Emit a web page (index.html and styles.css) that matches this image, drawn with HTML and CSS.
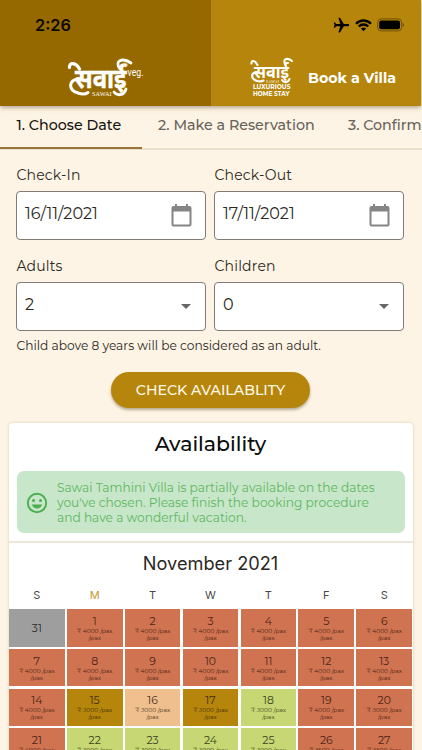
FILE: index.html
```html
<!DOCTYPE html>
<html lang="en">
<head>
<meta charset="utf-8">
<title>Sawai – Book a Villa</title>
<link rel="stylesheet" href="styles.css">
</head>
<body>
<header class="appbar">
  <div class="brand brand-veg">
    <div class="clock">2:26</div>
    <svg class="logo-veg" width="80" height="40" viewBox="0 0 80 40" fill="#fff">
      <text class="deva" transform="translate(8 30) scale(.92 1)" x="0" y="0" font-size="27" stroke="#fff" stroke-width=".5" textLength="56" lengthAdjust="spacingAndGlyphs">सवाई</text>
      <path d="M2.500 9.500C2 4 9 4 12.500 11" fill="none" stroke="#fff" stroke-width="3.200" stroke-linecap="round"/>
      <path d="M12 21C1 22 1 32 11 35C15 36.500 19 36 21 34.500" fill="none" stroke="#fff" stroke-width="3" stroke-linecap="round"/>
      <path d="M53 11C47 3 55-1 64 5" fill="none" stroke="#fff" stroke-width="2.800" stroke-linecap="round"/>
      <path d="M47 34C50 38 57 38 59 31" fill="none" stroke="#fff" stroke-width="2.800" stroke-linecap="round"/>
      <circle cx="58.500" cy="7" r="1.800" fill="none" stroke="#e8d7af" stroke-width=".8"/>
      <text class="serif" x="25" y="38" font-size="6.200" textLength="19.500">SAWAI</text>
      <text class="narrow" x="60.500" y="17.500" font-size="10" textLength="16" lengthAdjust="spacingAndGlyphs">veg.</text>
    </svg>
  </div>
  <div class="brand brand-villa">
    <div class="status">
      <svg width="17" height="17" viewBox="1 1 22 22"><path transform="rotate(90 12 12)" d="M21 16v-2l-8-5V3.500c0-.83-.67-1.500-1.500-1.500S10 2.670 10 3.500V9l-8 5v2l8-2.500V19l-2 1.500V22l3.500-1 3.500 1v-1.500L13 19v-5.500l8 2.500z"/></svg>
      <svg width="17" height="13" viewBox="0 0 17 13" fill="none" stroke="#000" stroke-width="2.300"><path d="M1 4.700C5.200.4 11.800.4 16 4.700M3.700 7.500C6.400 4.800 10.600 4.800 13.300 7.500"/><path d="M8.500 12.200 5.900 9.600Q8.500 7.500 11.100 9.600Z" fill="#000" stroke="none"/></svg>
      <svg width="28" height="14" viewBox="0 0 28 14"><rect x=".6" y=".9" width="24" height="12" rx="3.500" fill="none" stroke="#654b0c" stroke-width=".9"/><rect x="2.200" y="2.500" width="20.800" height="8.800" rx="2"/><path d="M25.700 5v4q1.300-.6 1.300-2t-1.300-2z" fill="#654b0c"/></svg>
    </div>
    <div class="villa-row">
      <svg class="logo-villa" width="46" height="40" viewBox="0 0 46 40" fill="#fff">
        <text class="deva" x="6" y="20" font-size="18" textLength="35" lengthAdjust="spacingAndGlyphs">सवाई</text>
        <path d="M3.500 5.500C3 2 7 2 9.500 7M9 14C2 15 3 21 9 23Q13 24 15.500 22.500M37.500 7C34 1 39-1 44 3M34 22C36 25 40 25 41.500 21" fill="none" stroke="#fff" stroke-width="2.100" stroke-linecap="round"/>
        <text class="serif" x="18" y="24.500" font-size="3.800" textLength="13">SAWAI</text>
        <text class="lux" x="5" y="31.300" font-size="6.300" textLength="37.500" lengthAdjust="spacingAndGlyphs">LUXURIOUS</text>
        <text class="lux" x="5" y="37.700" font-size="6.300" textLength="36.500" lengthAdjust="spacingAndGlyphs">HOME STAY</text>
      </svg>
      <span class="book">Book a Villa</span>
    </div>
  </div>
</header>
<nav class="tabs">
  <div class="tab tab-on">1. Choose Date</div>
  <div class="tab">2. Make a Reservation</div>
  <div class="tab">3. Confirm</div>
</nav>
<main>
  <form class="form">
    <div class="field"><label>Check-In</label>
      <div class="box"><span class="date">16/11/2021</span><svg class="cal" width="21" height="23" viewBox="0 0 21 23"><path fill="#858585" fill-rule="evenodd" d="M4 0h2v2h9V0h2v2h1.500Q20.500 2 20.500 4v16.500q0 2-2 2h-16q-2 0-2-2V4q0-2 2-2H4zM2.500 7.500v13h16v-13z"/></svg></div></div>
    <div class="field"><label>Check-Out</label>
      <div class="box"><span class="date">17/11/2021</span><svg class="cal" width="21" height="23" viewBox="0 0 21 23"><path fill="#858585" fill-rule="evenodd" d="M4 0h2v2h9V0h2v2h1.500Q20.500 2 20.500 4v16.500q0 2-2 2h-16q-2 0-2-2V4q0-2 2-2H4zM2.500 7.500v13h16v-13z"/></svg></div></div>
    <div class="field"><label>Adults</label>
      <div class="box"><span class="num">2</span><i class="caret"></i></div></div>
    <div class="field"><label>Children</label>
      <div class="box"><span class="num">0</span><i class="caret"></i></div></div>
  </form>
  <p class="hint">Child above 8 years will be considered as an adult.</p>
  <button class="check">CHECK AVAILABLITY</button>
  <section class="card">
    <h1>Availability</h1>
    <div class="alert">
      <svg width="22" height="22" viewBox="0 0 22 22" fill="#4caf50"><circle cx="11" cy="11" r="9.200" fill="none" stroke="#4caf50" stroke-width="1.900"/><circle cx="7.500" cy="8.500" r="1.500"/><circle cx="14.500" cy="8.500" r="1.500"/><path d="M5.800 12.500h10.400Q14.700 16.600 11 16.600T5.800 12.500z"/></svg>
      <div>Sawai Tamhini Villa is partially available on the dates<br>you've chosen. Please finish the booking procedure<br>and have a wonderful vacation.</div>
    </div>
    <h2>November 2021</h2>
    <div class="week"><span>S</span><span class="today">M</span><span>T</span><span>W</span><span>T</span><span>F</span><span>S</span></div>
    <div class="days">
      <div class="day past"><b>31</b></div>
      <div class="day full"><b>1</b><small>₹ 4000 /pax<br>/pax</small></div>
      <div class="day full"><b>2</b><small>₹ 4000 /pax<br>/pax</small></div>
      <div class="day full"><b>3</b><small>₹ 4000 /pax<br>/pax</small></div>
      <div class="day full"><b>4</b><small>₹ 4000 /pax<br>/pax</small></div>
      <div class="day full"><b>5</b><small>₹ 4000 /pax<br>/pax</small></div>
      <div class="day full"><b>6</b><small>₹ 4000 /pax<br>/pax</small></div>
      <div class="day full"><b>7</b><small>₹ 4000 /pax<br>/pax</small></div>
      <div class="day full"><b>8</b><small>₹ 4000 /pax<br>/pax</small></div>
      <div class="day full"><b>9</b><small>₹ 4000 /pax<br>/pax</small></div>
      <div class="day full"><b>10</b><small>₹ 4000 /pax<br>/pax</small></div>
      <div class="day full"><b>11</b><small>₹ 4000 /pax<br>/pax</small></div>
      <div class="day full"><b>12</b><small>₹ 4000 /pax<br>/pax</small></div>
      <div class="day full"><b>13</b><small>₹ 4000 /pax<br>/pax</small></div>
      <div class="day full"><b>14</b><small>₹ 4000 /pax<br>/pax</small></div>
      <div class="day gold"><b>15</b><small>₹ 3000 /pax<br>/pax</small></div>
      <div class="day part"><b>16</b><small>₹ 3000 /pax<br>/pax</small></div>
      <div class="day gold"><b>17</b><small>₹ 3000 /pax<br>/pax</small></div>
      <div class="day free"><b>18</b><small>₹ 3000 /pax<br>/pax</small></div>
      <div class="day full"><b>19</b><small>₹ 4000 /pax<br>/pax</small></div>
      <div class="day full"><b>20</b><small>₹ 3000 /pax<br>/pax</small></div>
      <div class="day full"><b>21</b><small>₹ 4000 /pax<br>/pax</small></div>
      <div class="day free"><b>22</b><small>₹ 3000 /pax<br>/pax</small></div>
      <div class="day free"><b>23</b><small>₹ 3000 /pax<br>/pax</small></div>
      <div class="day free"><b>24</b><small>₹ 3000 /pax<br>/pax</small></div>
      <div class="day free"><b>25</b><small>₹ 3000 /pax<br>/pax</small></div>
      <div class="day full"><b>26</b><small>₹ 3500 /pax<br>/pax</small></div>
      <div class="day full"><b>27</b><small>₹ 3500 /pax<br>/pax</small></div>
    </div>
  </section>
</main>
</body>
</html>
```
FILE: styles.css
```css
* { box-sizing: border-box; }
body { margin: 0; width: 422px; height: 750px; overflow: hidden; background: #fdf4e5; font-family: Montserrat, Inter, sans-serif; color: #2b2823; }
.appbar { display: flex; width: 421px; height: 106px; position: relative; box-shadow: 0 1px 5px rgba(70, 50, 10, .5); }
.brand { flex: 0 0 211px; min-width: 0; }
.brand-veg { background: #966900; }
.brand-villa { flex-basis: 210px; background: #b6850c; padding-left: 37px; }
.clock { font: 600 16.300px/20px Inter, sans-serif; color: #0c0900; padding: 15px 0 0 35px; height: 58px; }
.logo-veg { display: block; margin-left: 67px; overflow: visible; }
.logo-villa { flex: none; overflow: visible; }
.deva { font-family: "Noto Sans Devanagari", "Noto Sans", sans-serif; font-weight: 700; }
.serif { font-family: "Liberation Serif", serif; }
.narrow { font-family: Roboto, sans-serif; }
.lux { font-family: Montserrat, Inter, sans-serif; font-weight: 700; }
.status { display: flex; align-items: center; gap: 5px; height: 20px; margin: 15px 0 23px 84.500px; }
.villa-row { display: flex; }
.book { color: #fff; font-weight: 700; font-size: 14.250px; line-height: 20px; margin: 10px 0 0 14px; white-space: nowrap; }
.tabs { display: flex; height: 44px; box-shadow: inset 0 -2px #eadfcb; overflow: hidden; }
.tab { flex: none; padding: 0 17px 0 16.500px; line-height: 38px; font-size: 14.250px; font-weight: 500; color: #68625a; white-space: nowrap; }
.tab-on { width: 141.500px; height: 43px; color: #17130d; border-bottom: 2px solid #997437; }
.tab:nth-child(2) { width: 190px; }
.form { display: grid; grid-template-columns: 190px 190px; column-gap: 8px; row-gap: 16.500px; padding: 16px 0 0 16.400px; }
.field label { display: block; height: 25px; line-height: 18px; font-size: 14px; letter-spacing: .2px; }
.box { height: 49px; border: 1px solid #807b74; border-radius: 4px; background: #fff; display: flex; justify-content: space-between; align-items: center; padding: 0 13.500px 0 7.500px; }
.date, .num { font-size: 16px; padding-bottom: 4px; }
.caret { border: 5px solid transparent; border-top-color: #666; border-bottom: 0; margin-right: 1px; }
.hint { margin: 7.500px 0 0 16.500px; font-size: 12.220px; line-height: 16px; white-space: nowrap; }
.check { display: block; width: 199px; height: 36px; margin: 18px 0 0 111px; border: 0; border-radius: 18px; background: #b6850c; color: #fff9e8; font: 500 14.200px/37px Montserrat, Inter, sans-serif; padding: 0; box-shadow: 0 2px 3px rgba(80, 60, 20, .4); white-space: nowrap; }
.card { width: 404px; margin: 14.500px 0 0 8.500px; background: #fff; border-radius: 4px 4px 0 0; box-shadow: 0 0 3px rgba(140, 110, 60, .3); }
h1 { margin: 0; height: 48.500px; font-size: 20.500px; font-weight: 500; line-height: 41px; text-align: center; color: #0c0c0c; }
.alert { margin: 0 8px; height: 62px; border-radius: 7px; background: #c8e6c9; color: #5cb860; display: flex; align-items: center; padding: 1px 0 0 9.500px; gap: 9px; font-size: 12.200px; line-height: 15.300px; white-space: nowrap; }
.alert svg { flex: none; }
h2 { margin: 8px 0 0; border-top: 2px solid #eee5db; height: 44px; font: 400 18.200px/41px Inter, sans-serif; text-align: center; }
.week, .days { display: grid; grid-template-columns: repeat(7, 1fr); padding: 0 .5px; column-gap: 2.300px; }
.week { height: 24px; font: 400 11px/20px Inter, sans-serif; text-align: center; color: #484848; }
.week .today { color: #c49a35; }
.days { row-gap: 2.300px; grid-auto-rows: 37.500px; }
.day { text-align: center; display: flex; flex-direction: column; justify-content: center; line-height: 12px; padding-top: 2px; }
.day b { font-weight: 400; font-size: 10.800px; }
.day small { font-size: 6px; line-height: 7px; }
.past { background: #9e9e9e; }
.full { background: #cf7350; color: #4b2417; }
.gold { background: #b6850c; color: #3e2d05; }
.part { background: #efbf8d; color: #4b3622; }
.free { background: #c6d773; color: #3c441c; }
```
